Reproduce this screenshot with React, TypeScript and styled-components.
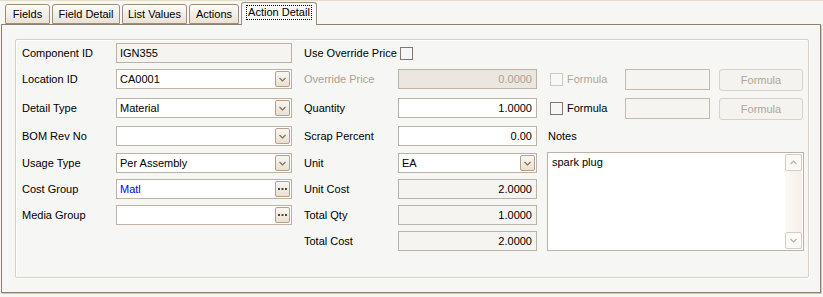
import { FC, ReactNode } from "react";
import styled, { createGlobalStyle } from "styled-components";

const GlobalStyle = createGlobalStyle`
  html, body {
    margin: 0;
    padding: 0;
    background: #f6f6f4;
  }
  body {
    font-family: "Liberation Sans", Tahoma, Arial, sans-serif;
    font-size: 11px;
    color: #000;
  }
`;

const ROWS = "26px 29px 28px 27px 26px 26px 26px 20px";

const Page = styled.div`
  width: 823px;
  height: 297px;
  box-sizing: border-box;
  border-top: 1px solid #e6dccb;
  padding: 1px 2px 0 1px;
`;

const TabStrip = styled.div`
  display: flex;
  align-items: flex-end;
  height: 22px;
  padding-left: 4px;
  gap: 2px;
  position: relative;
  z-index: 1;
`;

const Tab = styled.div<{ w: number; active?: boolean }>`
  box-sizing: border-box;
  width: ${(p) => p.w}px;
  height: ${(p) => (p.active ? 23 : 20)}px;
  margin-bottom: ${(p) => (p.active ? -1 : 0)}px;
  border: 1px solid #9c8e7e;
  border-bottom: ${(p) => (p.active ? "none" : "1px solid #9c8e7e")};
  border-radius: 3px 3px 0 0;
  background: ${(p) =>
    p.active
      ? "#f7f7f5"
      : "linear-gradient(#fdfcfa, #f1ece3 60%, #e9e2d5)"};
  display: flex;
  align-items: ${(p) => (p.active ? "flex-start" : "center")};
  padding-top: ${(p) => (p.active ? 3 : 0)}px;
  justify-content: center;
  white-space: nowrap;
`;

const TabLabel = styled.span<{ focused?: boolean }>`
  padding: 0 1px;
  outline: ${(p) => (p.focused ? "1px dotted #000" : "none")};
  line-height: 13px;
`;

const Panel = styled.div`
  height: 269px;
  box-sizing: border-box;
  border: 1px solid #8f7f6d;
  box-shadow: 1px 1px 0 #cfc6ba;
  background: #f6f6f4;
  padding: 14px 11px 14px 13px;
`;

const GroupBox = styled.div`
  width: 794px;
  height: 239px;
  box-sizing: border-box;
  border: 1px solid #d9d0c1;
  border-radius: 2px;
  box-shadow: inset 1px 1px 0 #fff, 1px 1px 0 #fff;
  padding: 3px 0 0 6px;
  display: flex;
  align-items: flex-start;
`;

const Column = styled.div<{ cols: string; offset?: number }>`
  display: grid;
  grid-template-columns: ${(p) => p.cols};
  grid-template-rows: ${ROWS};
  align-items: start;
  margin-left: ${(p) => p.offset ?? 0}px;
`;

const Label = styled.div<{ disabled?: boolean }>`
  height: 20px;
  display: flex;
  align-items: center;
  color: ${(p) => (p.disabled ? "#a7a296" : "#000")};
  white-space: nowrap;
`;

const Box = styled.div<{ tone?: "white" | "read" | "disabled"; align?: "left" | "right" }>`
  position: relative;
  box-sizing: border-box;
  height: 20px;
  border: 1px solid #bdb2a6;
  background: ${(p) =>
    p.tone === "disabled" ? "#ece7de" : p.tone === "read" ? "#f5f4f1" : "#fff"};
  color: ${(p) => (p.tone === "disabled" ? "#a7a296" : "#000")};
  display: flex;
  align-items: center;
  justify-content: ${(p) => (p.align === "right" ? "flex-end" : "flex-start")};
  padding: 0 ${(p) => (p.align === "right" ? 4 : 3)}px 0 3px;
  white-space: nowrap;
`;

const Value = styled.span<{ link?: boolean }>`
  flex: 1;
  color: ${(p) => (p.link ? "#0000ff" : "inherit")};
`;

const SmallButton = styled.div`
  box-sizing: border-box;
  width: 15px;
  height: 16px;
  margin-right: -2px;
  border: 1px solid #b5a18b;
  border-radius: 2px;
  background: linear-gradient(#faf7f1, #e9e0cf);
  display: flex;
  align-items: center;
  justify-content: center;
`;

const CheckBox = styled.div<{ disabled?: boolean }>`
  box-sizing: border-box;
  width: 13px;
  height: 13px;
  border: 1px solid ${(p) => (p.disabled ? "#d2cac1" : "#85786a")};
  background: ${(p) => (p.disabled ? "#f8f8f6" : "transparent")};
`;

const CheckRow = styled.div<{ disabled?: boolean; indent?: number }>`
  height: 20px;
  display: flex;
  align-items: center;
  gap: 4px;
  padding-left: ${(p) => p.indent ?? 0}px;
  color: ${(p) => (p.disabled ? "#aca899" : "#000")};
`;

const FormulaRow = styled.div`
  height: 20px;
  display: flex;
  align-items: center;
  padding-left: 3px;
`;

const FormulaCheck = styled(CheckRow)`
  width: 75px;
`;

const FormulaInput = styled.div`
  box-sizing: border-box;
  width: 85px;
  height: 21px;
  border: 1px solid #c4bab0;
  background: #f5f4f1;
`;

const FormulaButton = styled.div`
  box-sizing: border-box;
  width: 84px;
  height: 22px;
  margin-left: 9px;
  margin-top: 2px;
  border: 1px solid #d9d1c5;
  border-radius: 3px;
  background: #f4f3ef;
  color: #aca899;
  display: flex;
  align-items: center;
  justify-content: center;
`;

const NotesLabel = styled.div`
  grid-row: 4;
  height: 20px;
  display: flex;
  align-items: center;
  padding-left: 1px;
`;

const Notes = styled.div`
  grid-row: 5 / span 4;
  box-sizing: border-box;
  height: 99px;
  margin-top: -1px;
  border: 1px solid #bdb2a6;
  background: #fff;
  display: flex;
`;

const NotesText = styled.div`
  flex: 1;
  padding: 3px 4px;
`;

const ScrollBar = styled.div`
  width: 17px;
  margin: 1px 1px 1px 0;
  background: linear-gradient(90deg, #fbf9f6, #f6efe9);
  display: flex;
  flex-direction: column;
  justify-content: space-between;
`;

const ScrollButton = styled.div`
  box-sizing: border-box;
  width: 17px;
  height: 17px;
  border: 1px solid #d5cdc4;
  border-radius: 2px;
  background: #fbfaf7;
  display: flex;
  align-items: center;
  justify-content: center;
`;

const Chevron: FC<{ up?: boolean; color?: string }> = ({ up, color = "#7d7063" }) => (
  <svg width="7" height="5" viewBox="0 0 7 5">
    <polyline
      points={up ? "0.5,4 3.5,1 6.5,4" : "0.5,1 3.5,4 6.5,1"}
      fill="none"
      stroke={color}
      strokeWidth="1.2"
    />
  </svg>
);

const Dots: FC = () => (
  <svg width="9" height="2" viewBox="0 0 9 2">
    <rect x="0" y="0" width="2" height="2" fill="#4a4640" />
    <rect x="3.5" y="0" width="2" height="2" fill="#4a4640" />
    <rect x="7" y="0" width="2" height="2" fill="#4a4640" />
  </svg>
);

type Kind = "text" | "combo" | "lookup";

interface FieldProps {
  value?: string;
  kind?: Kind;
  tone?: "white" | "read" | "disabled";
  align?: "left" | "right";
  link?: boolean;
}

const Field: FC<FieldProps> = ({ value, kind = "text", tone = "white", align, link }) => (
  <Box tone={tone} align={align}>
    {align === "right" ? value : <Value link={link}>{value}</Value>}
    {kind === "combo" && (
      <SmallButton>
        <Chevron />
      </SmallButton>
    )}
    {kind === "lookup" && (
      <SmallButton>
        <Dots />
      </SmallButton>
    )}
  </Box>
);

const tabs = [
  { label: "Fields", w: 45 },
  { label: "Field Detail", w: 68 },
  { label: "List Values", w: 65 },
  { label: "Actions", w: 50 },
  { label: "Action Detail", w: 76, active: true },
];

const leftRows: { label: string; field: FieldProps }[] = [
  { label: "Component ID", field: { value: "IGN355", tone: "read" } },
  { label: "Location ID", field: { value: "CA0001", kind: "combo" } },
  { label: "Detail Type", field: { value: "Material", kind: "combo" } },
  { label: "BOM Rev No", field: { value: "", kind: "combo" } },
  { label: "Usage Type", field: { value: "Per Assembly", kind: "combo" } },
  { label: "Cost Group", field: { value: "Matl", kind: "lookup", link: true } },
  { label: "Media Group", field: { value: "", kind: "lookup" } },
];

const midRows: { label: string; disabled?: boolean; field: FieldProps }[] = [
  { label: "Override Price", disabled: true, field: { value: "0.0000", tone: "disabled", align: "right" } },
  { label: "Quantity", field: { value: "1.0000", align: "right" } },
  { label: "Scrap Percent", field: { value: "0.00", align: "right" } },
  { label: "Unit", field: { value: "EA", kind: "combo" } },
  { label: "Unit Cost", field: { value: "2.0000", tone: "read", align: "right" } },
  { label: "Total Qty", field: { value: "1.0000", tone: "read", align: "right" } },
  { label: "Total Cost", field: { value: "2.0000", tone: "read", align: "right" } },
];

const Row: FC<{ children: ReactNode }> = ({ children }) => <>{children}</>;

const App: FC = () => (
  <Page>
    <GlobalStyle />
    <TabStrip>
      {tabs.map((t) => (
        <Tab key={t.label} w={t.w} active={t.active}>
          <TabLabel focused={t.active}>{t.label}</TabLabel>
        </Tab>
      ))}
    </TabStrip>
    <Panel>
      <GroupBox>
        <Column cols="94px 176px">
          {leftRows.map((r) => (
            <Row key={r.label}>
              <Label>{r.label}</Label>
              <Field {...r.field} />
            </Row>
          ))}
        </Column>

        <Column cols="94px 139px" offset={12}>
          <Label>Use Override Price</Label>
          <CheckRow indent={2}>
            <CheckBox />
          </CheckRow>
          {midRows.map((r) => (
            <Row key={r.label}>
              <Label disabled={r.disabled}>{r.label}</Label>
              <Field {...r.field} />
            </Row>
          ))}
        </Column>

        <Column cols="257px" offset={10}>
          <div />
          <FormulaRow>
            <FormulaCheck disabled>
              <CheckBox disabled />
              Formula
            </FormulaCheck>
            <FormulaInput />
            <FormulaButton>Formula</FormulaButton>
          </FormulaRow>
          <FormulaRow>
            <FormulaCheck>
              <CheckBox />
              Formula
            </FormulaCheck>
            <FormulaInput />
            <FormulaButton>Formula</FormulaButton>
          </FormulaRow>
          <NotesLabel>Notes</NotesLabel>
          <Notes>
            <NotesText>spark plug</NotesText>
            <ScrollBar>
              <ScrollButton>
                <Chevron up color="#b9b1a8" />
              </ScrollButton>
              <ScrollButton>
                <Chevron color="#b9b1a8" />
              </ScrollButton>
            </ScrollBar>
          </Notes>
        </Column>
      </GroupBox>
    </Panel>
  </Page>
);

export default App;
